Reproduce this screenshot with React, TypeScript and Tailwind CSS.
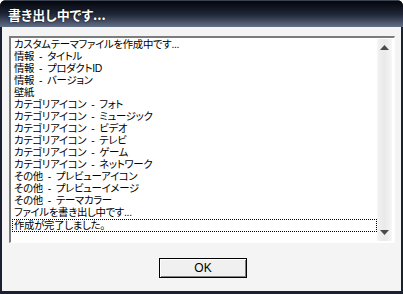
const lines = [
  "カスタムテーマファイルを作成中です...",
  "情報 - タイトル",
  "情報 - プロダクトID",
  "情報 - バージョン",
  "壁紙",
  "カテゴリアイコン - フォト",
  "カテゴリアイコン - ミュージック",
  "カテゴリアイコン - ビデオ",
  "カテゴリアイコン - テレビ",
  "カテゴリアイコン - ゲーム",
  "カテゴリアイコン - ネットワーク",
  "その他 - プレビューアイコン",
  "その他 - プレビューイメージ",
  "その他 - テーマカラー",
  "ファイルを書き出し中です...",
];

const spaced = (s: string) => s.replace(/ - /g, "\u2002-\u2002");

function Arrow({ down }: { down?: boolean }) {
  return (
    <svg width="9" height="5" viewBox="0 0 9 5" className="block">
      <polygon points={down ? "0,0 9,0 4.5,5" : "0,5 9,5 4.5,0"} fill="#4a4a4a" />
    </svg>
  );
}

export default function App() {
  return (
    <div className="w-[403px] h-[294px] flex flex-col overflow-hidden rounded-t-[6px] bg-[#1b2030] font-['Noto_Sans_CJK_JP',sans-serif]">
      {/* title bar */}
      <div className="h-[27px] shrink-0 flex items-center pl-[8px] border-t border-[#3b4252] bg-linear-to-b from-[#05070c] via-[#1e2536] to-[#646f89]">
        <span className="text-white font-bold text-[13px] leading-none [font-feature-settings:'palt'] [text-shadow:0_0_2px_#000]">
          書き出し中です...
        </span>
      </div>

      {/* client */}
      <div className="flex-1 flex flex-col mx-[2px] mb-[3px] bg-[#f4f4f4] pt-[9px] pl-[7px] pr-[6px]">
        <div className="h-[207px] flex border-t-2 border-l-2 border-[#7c7c7c] border-r border-b border-r-[#fdfdfd] border-b-[#fdfdfd] bg-white">
          <div className="flex-1 pt-[1px] pl-[1px] text-[10.4px] leading-[12px] text-black font-['Liberation_Sans','Noto_Sans_CJK_JP',sans-serif] [font-feature-settings:'palt'] tracking-[-0.3px]">
            {lines.map((l) => (
              <div key={l} className="pl-[2px] h-[12px] whitespace-pre">
                {spaced(l)}
              </div>
            ))}
            <div className="pl-[1px] h-[13px] whitespace-nowrap border border-dotted border-black leading-[11px]">
              作成が完了しました。
            </div>
          </div>
          <div className="w-[15px] mr-[2px] my-[1px] flex flex-col items-center justify-between py-[6px] bg-linear-to-r from-[#f1f1f1] via-[#e9e9e9] to-[#f4f4f4] border-x border-[#f7f7f7]">
            <Arrow />
            <Arrow down />
          </div>
        </div>

        <div className="flex justify-center mt-[15px] pl-[2px]">
          <button className="w-[88px] h-[20px] border border-black bg-[#f0f0f0] shadow-[inset_1px_1px_0_#ffffff,inset_-1px_-1px_0_#808080] text-[12px] leading-none text-black font-['Liberation_Sans',sans-serif]">
            OK
          </button>
        </div>
      </div>
    </div>
  );
}
